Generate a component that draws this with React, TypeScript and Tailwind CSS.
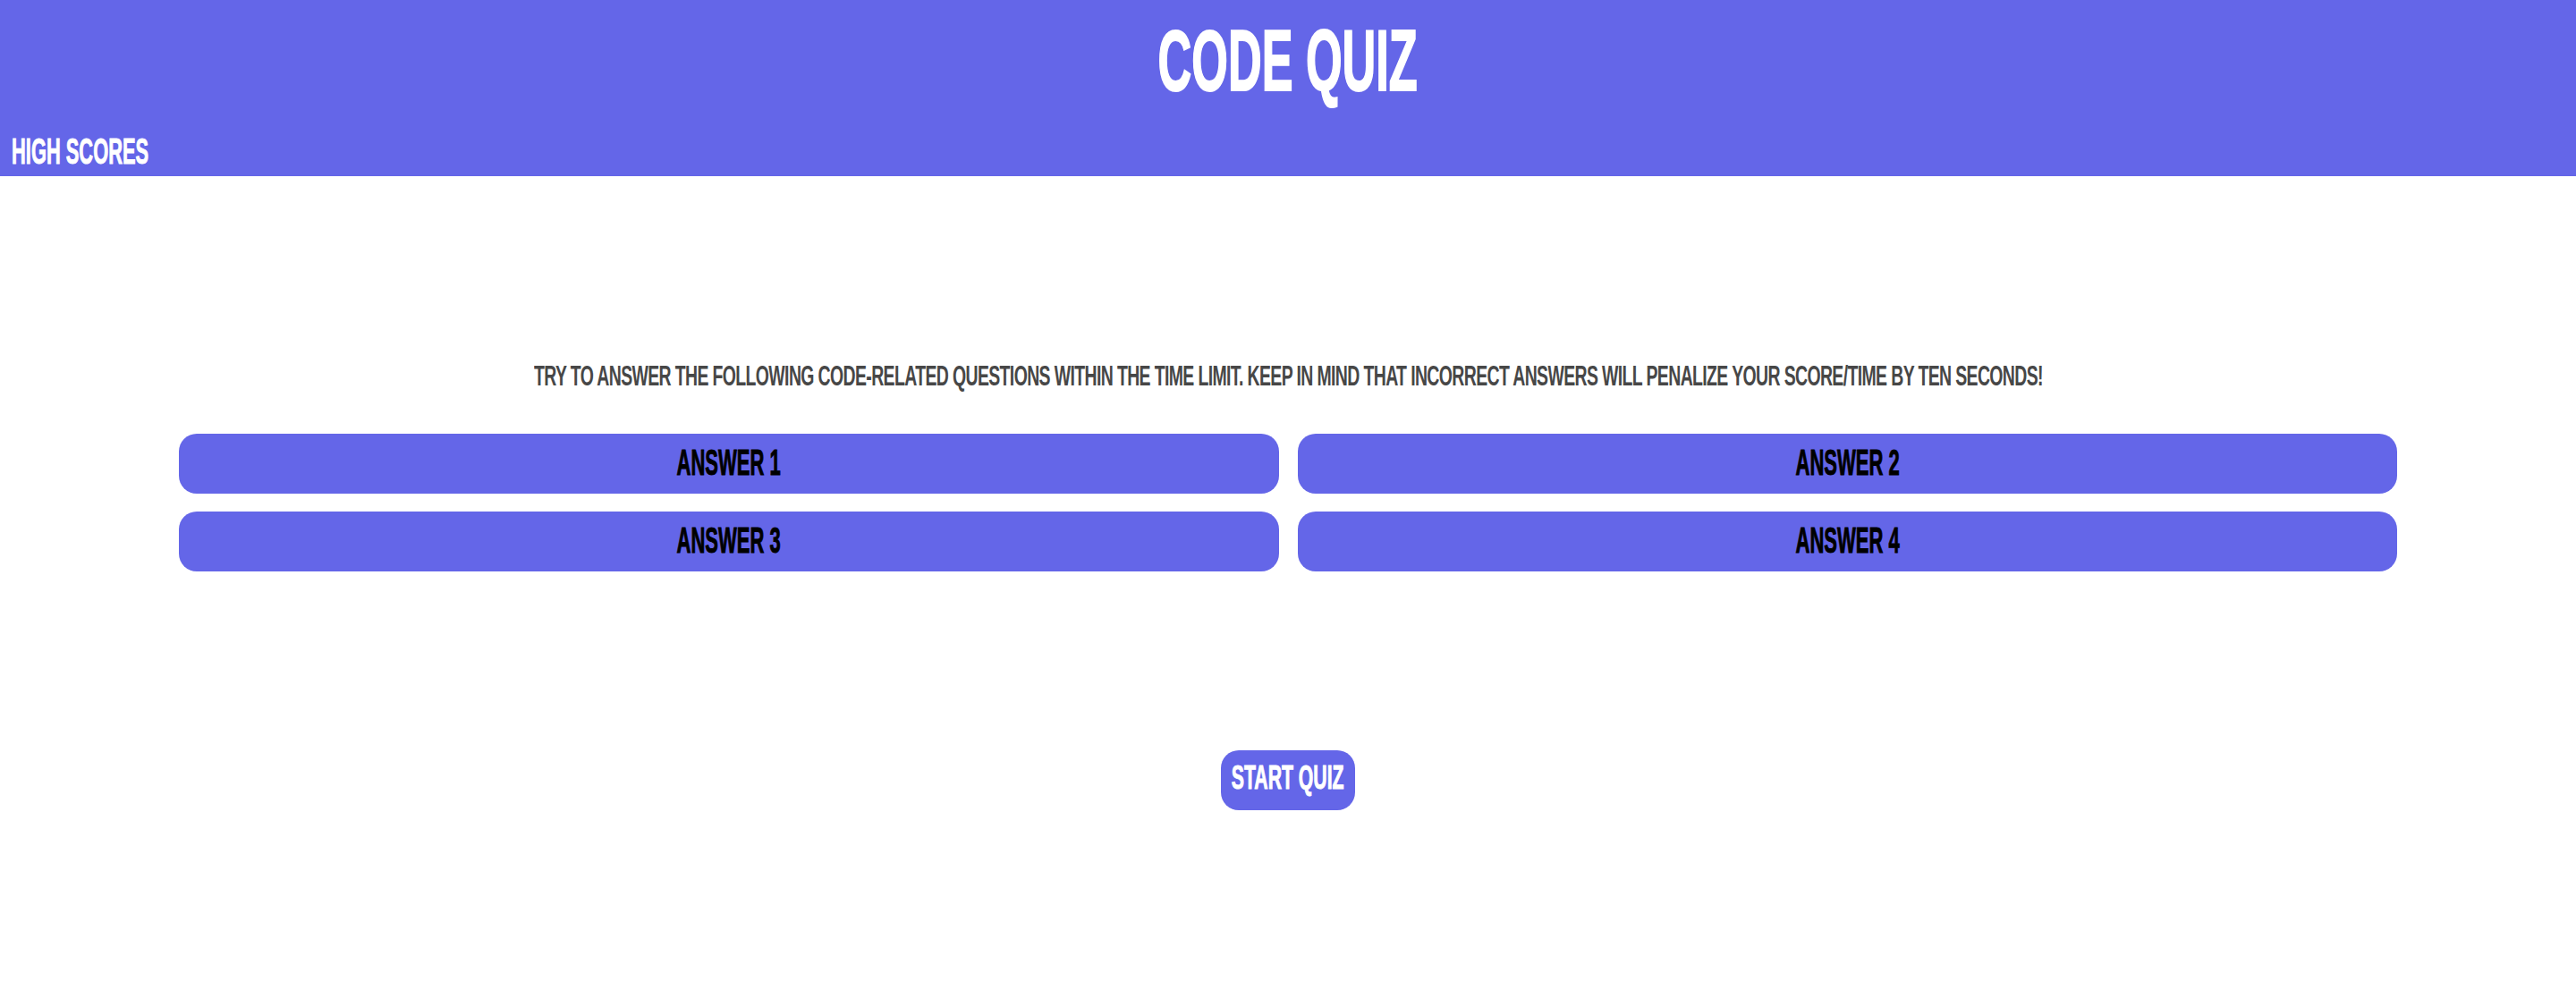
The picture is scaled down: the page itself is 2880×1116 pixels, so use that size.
import React from "react";

const font = { fontFamily: '"Liberation Sans", Arial, sans-serif' };

export default function App() {
  return (
    <div className="min-h-screen bg-white font-bold" style={font}>
      <header className="h-[197px] bg-[#6466e8] pt-[20px]">
        <h1 className="flex justify-center text-[96px] leading-none font-bold text-white">
          <span className="inline-block scale-x-[0.544] [-webkit-text-stroke:2px_currentcolor]">CODE QUIZ</span>
        </h1>
        <div className="mt-[33px] pl-[13px] text-[40px] leading-none text-white">
          <span className="inline-block origin-left scale-x-[0.547] [-webkit-text-stroke:1px_currentcolor]">HIGH SCORES</span>
        </div>
      </header>
      <main>
        <div className="mt-[207px] flex justify-center text-[32px] leading-none text-[#474747]">
          <p className="inline-block shrink-0 whitespace-nowrap tracking-[-1px] scale-x-[0.607]">
            TRY TO ANSWER THE FOLLOWING CODE-RELATED QUESTIONS WITHIN THE TIME LIMIT. KEEP IN MIND THAT INCORRECT ANSWERS WILL PENALIZE YOUR SCORE/TIME BY TEN SECONDS!
          </p>
        </div>
        <div className="mx-auto mt-[49px] grid w-[2480px] grid-cols-2 gap-x-[21px] gap-y-[20px]">
          {["ANSWER 1", "ANSWER 2", "ANSWER 3", "ANSWER 4"].map((a) => (
            <button
              key={a}
              className="flex h-[67px] items-center justify-center rounded-[20px] bg-[#6466e8] pb-[3px] text-[40px] leading-none font-bold text-black"
              style={font}
            >
              <span className="inline-block scale-x-[0.55] [-webkit-text-stroke:1px_currentcolor]">{a}</span>
            </button>
          ))}
        </div>
        <div className="mt-[200px] flex justify-center">
          <button
            className="flex h-[67px] w-[150px] items-center justify-center rounded-[20px] bg-[#6466e8] pb-[5px] text-[36px] leading-none font-bold text-white"
            style={font}
          >
            <span className="inline-block shrink-0 whitespace-nowrap scale-x-[0.59] [-webkit-text-stroke:1px_currentcolor]">START QUIZ</span>
          </button>
        </div>
      </main>
    </div>
  );
}
